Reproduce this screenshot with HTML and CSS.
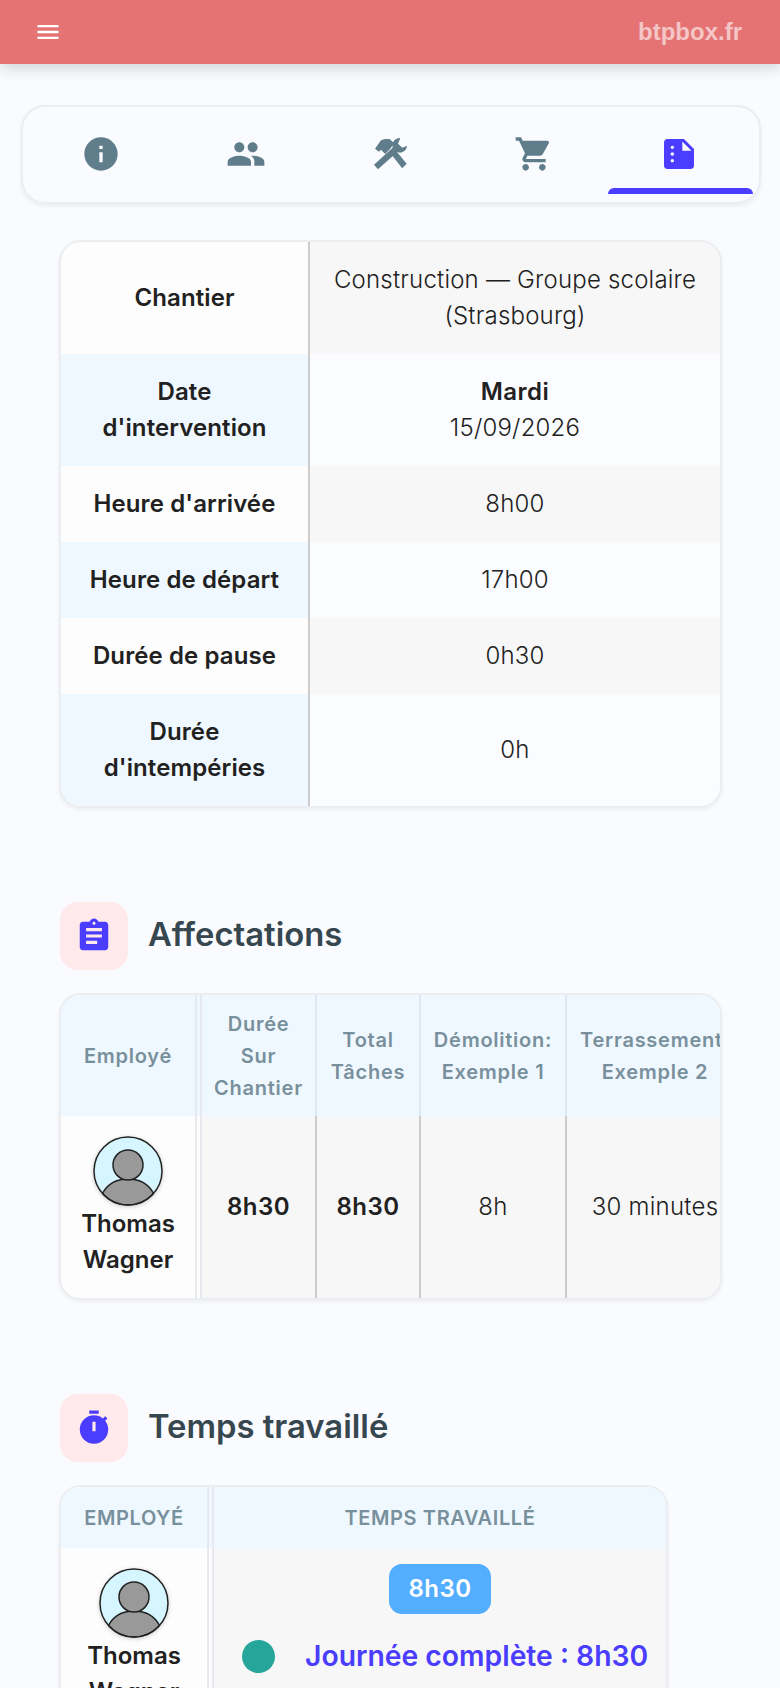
FILE: index.html
```html
<!DOCTYPE html>
<html lang="fr">
<head>
    <meta charset="UTF-8">
    <meta name="viewport" content="width=device-width, initial-scale=1.0">
    <title>btpbox.fr</title>
    <link rel="stylesheet" href="styles.css">
</head>
<body>

<header class="topbar">
    <svg class="menu-icon" viewBox="0 0 24 24"><path d="M3 18h18v-2H3v2zm0-5h18v-2H3v2zm0-7v2h18V6H3z"/></svg>
    <span class="brand">btpbox.fr</span>
</header>

<nav class="tabs">
    <div class="tab">
        <svg viewBox="0 0 24 24"><path d="M12 2C6.48 2 2 6.48 2 12s4.48 10 10 10 10-4.48 10-10S17.52 2 12 2zm1 15h-2v-6h2v6zm0-8h-2V7h2v2z"/></svg>
    </div>
    <div class="tab">
        <svg viewBox="0 0 24 24"><path d="M16 11c1.66 0 2.99-1.34 2.99-3S17.66 5 16 5c-1.66 0-3 1.34-3 3s1.34 3 3 3zm-8 0c1.66 0 2.99-1.34 2.99-3S9.66 5 8 5C6.34 5 5 6.34 5 8s1.34 3 3 3zm0 2c-2.33 0-7 1.17-7 3.5V19h14v-2.5c0-2.33-4.67-3.5-7-3.5zm8 0c-.29 0-.62.02-.97.05 1.16.84 1.97 1.97 1.97 3.45V19h6v-2.5c0-2.33-4.67-3.5-7-3.5z"/></svg>
    </div>
    <div class="tab">
        <svg viewBox="0 0 24 24">
            <path d="M12 12l2.500-2.500 6.900 8.400-2.700 2.700z"/>
            <path d="M2.400 8.800L6 3.800C8 2.900 10 2.800 11.300 3.200L14 5.600 11 9.500 8.500 12 6 9.500 4.800 10.600z"/>
            <path d="M1.800 18.400L13.500 7.800l2.500 2.800L4.200 21.200z"/>
            <path d="M17.600 2.400a4.400 4.400 0 1 0 4 4.600l-2.800 1.300-2.600-2.400z"/>
        </svg>
    </div>
    <div class="tab">
        <svg viewBox="0 0 24 24"><path d="M7 18c-1.100 0-1.990.9-1.990 2S5.900 22 7 22s2-.9 2-2-.9-2-2-2zM1 2v2h2l3.600 7.590-1.350 2.450c-.16.28-.25.61-.25.96 0 1.100.9 2 2 2h12v-2H7.420c-.14 0-.25-.11-.25-.25l.03-.12.9-1.630h7.450c.75 0 1.410-.41 1.750-1.030l3.580-6.490c.08-.14.12-.31.12-.48 0-.55-.45-1-1-1H5.210l-.94-2H1zm16 16c-1.100 0-1.990.9-1.990 2s.89 2 1.990 2 2-.9 2-2-.9-2-2-2z"/></svg>
    </div>
    <div class="tab tab-active">
        <svg viewBox="0 0 24 24"><path d="M15 3H5c-1.100 0-1.990.9-1.990 2L3 19c0 1.100.89 2 1.990 2H19c1.100 0 2-.9 2-2V9l-6-6zM8 17c-.55 0-1-.45-1-1s.45-1 1-1 1 .45 1 1-.45 1-1 1zm0-4c-.55 0-1-.45-1-1s.45-1 1-1 1 .45 1 1-.45 1-1 1zm0-4c-.55 0-1-.45-1-1s.45-1 1-1 1 .45 1 1-.45 1-1 1zm6 1V4.500l5.500 5.500H14z"/></svg>
    </div>
</nav>

<main class="content">

    <div class="card">
        <table class="info-table">
            <colgroup><col class="info-label-col"><col></colgroup>
            <tr>
                <th>Chantier</th>
                <td>Construction — Groupe scolaire (Strasbourg)</td>
            </tr>
            <tr>
                <th>Date d'intervention</th>
                <td><strong>Mardi</strong><br>15/09/2026</td>
            </tr>
            <tr>
                <th>Heure d'arrivée</th>
                <td>8h00</td>
            </tr>
            <tr>
                <th>Heure de départ</th>
                <td>17h00</td>
            </tr>
            <tr>
                <th>Durée de pause</th>
                <td>0h30</td>
            </tr>
            <tr>
                <th>Durée d'intempéries</th>
                <td>0h</td>
            </tr>
        </table>
    </div>

    <section class="section">
        <div class="section-head">
            <div class="section-icon">
                <svg viewBox="0 0 24 24"><path d="M19 3h-4.180C14.400 1.840 13.300 1 12 1c-1.300 0-2.400.84-2.820 2H5c-1.100 0-2 .9-2 2v14c0 1.100.9 2 2 2h14c1.100 0 2-.9 2-2V5c0-1.100-.9-2-2-2zm-7 0c.55 0 1 .45 1 1s-.45 1-1 1-1-.45-1-1 .45-1 1-1zm2 14H7v-2h7v2zm3-4H7v-2h10v2zm0-4H7V7h10v2z"/></svg>
            </div>
            <h2>Affectations</h2>
        </div>
        <div class="card">
            <table class="data-table assign-table">
                <colgroup>
                    <col class="a-employee"><col class="a-total"><col class="a-tasks"><col class="a-demo"><col class="a-earth">
                </colgroup>
                <thead>
                    <tr>
                        <th class="sticky-col">Employé</th>
                        <th>Durée<br>Sur<br>Chantier</th>
                        <th>Total<br>Tâches</th>
                        <th>Démolition:<br>Exemple 1</th>
                        <th>Terrassement:<br>Exemple 2</th>
                    </tr>
                </thead>
                <tbody>
                    <tr>
                        <td class="sticky-col employee">
                            <svg class="avatar" viewBox="0 0 70 70">
                                <circle cx="35" cy="35" r="34" fill="#d6f6ff"/>
                                <path d="M9.500 57.500C15 47 25 43 35 43s20 4 25.500 14.500A34 34 0 0 1 35 69 34 34 0 0 1 9.500 57.500z" fill="#999" stroke="#222" stroke-width="1.500"/>
                                <circle cx="35" cy="29" r="15" fill="#999" stroke="#222" stroke-width="1.500"/>
                                <circle cx="35" cy="35" r="34" fill="none" stroke="#222" stroke-width="1.500"/>
                            </svg>
                            <div>Thomas Wagner</div>
                        </td>
                        <td><strong>8h30</strong></td>
                        <td><strong>8h30</strong></td>
                        <td>8h</td>
                        <td>30 minutes</td>
                    </tr>
                </tbody>
            </table>
        </div>
    </section>

    <section class="section">
        <div class="section-head">
            <div class="section-icon">
                <svg viewBox="0 0 24 24"><path fill-rule="evenodd" d="M15 1H9v2h6V1zm-4 13h2V8h-2v6zm8.030-6.610l1.420-1.420c-.43-.51-.9-.99-1.410-1.410l-1.420 1.420C16.070 4.740 14.120 4 12 4c-4.970 0-9 4.030-9 9s4.020 9 9 9 9-4.030 9-9c0-2.120-.74-4.070-1.970-5.610z"/></svg>
            </div>
            <h2>Temps travaillé</h2>
        </div>
        <div class="card card-narrow">
            <table class="data-table time-table">
                <colgroup><col class="t-employee"><col></colgroup>
                <thead>
                    <tr>
                        <th class="sticky-col upper">Employé</th>
                        <th class="upper">Temps travaillé</th>
                    </tr>
                </thead>
                <tbody>
                    <tr>
                        <td class="sticky-col employee">
                            <svg class="avatar" viewBox="0 0 70 70">
                                <circle cx="35" cy="35" r="34" fill="#d6f6ff"/>
                                <path d="M9.500 57.500C15 47 25 43 35 43s20 4 25.500 14.500A34 34 0 0 1 35 69 34 34 0 0 1 9.500 57.500z" fill="#999" stroke="#222" stroke-width="1.500"/>
                                <circle cx="35" cy="29" r="15" fill="#999" stroke="#222" stroke-width="1.500"/>
                                <circle cx="35" cy="35" r="34" fill="none" stroke="#222" stroke-width="1.500"/>
                            </svg>
                            <div>Thomas Wagner</div>
                        </td>
                        <td class="time-cell">
                            <span class="time-badge">8h30</span>
                            <div class="day-line">
                                <span class="day-dot"></span>
                                <span class="day-text">Journée complète : 8h30</span>
                            </div>
                        </td>
                    </tr>
                </tbody>
            </table>
        </div>
    </section>

</main>

</body>
</html>
```

FILE: styles.css
```css
html, body {
    height: 1688px;
    overflow: hidden;
}
body {
    font-family: Inter, "Liberation Sans", sans-serif;
    margin: 0;
    background-color: #fafbfe;
    color: #212121;
}
.topbar {
    height: 64px;
    padding: 0 38px 0 34px;
    display: flex;
    justify-content: space-between;
    align-items: center;
    background-color: #e57373;
    box-shadow: 0 4px 14px rgba(0,0,0,0.16);
}
.menu-icon {
    width: 28px;
    height: 28px;
    fill: #fff;
}
.brand {
    font-family: "Liberation Sans", Arial, sans-serif;
    font-size: 24px;
    font-weight: 700;
    color: rgba(255,255,255,0.6);
}
.tabs {
    display: flex;
    width: 740px;
    height: 99px;
    margin: 41px 0 0 21px;
    padding: 0 6px;
    box-sizing: border-box;
    border: 2px solid #ebedf0;
    border-radius: 24px;
    box-shadow: 0 2px 4px rgba(0,0,0,0.06);
}
.tab {
    flex: 1;
    height: 87px;
    display: flex;
    justify-content: center;
    align-items: center;
    box-sizing: border-box;
    padding-top: 6px;
    position: relative;
}
.tab svg {
    width: 40px;
    height: 40px;
    fill: #607d8b;
}
.tab:nth-child(n+4) svg {
    margin-right: 4px;
}
.tab-active::after {
    content: "";
    position: absolute;
    left: 0;
    right: 0;
    bottom: 0;
    height: 6px;
    border-radius: 6px 6px 0 0;
    background-color: #4a3dff;
}
.tab-active svg {
    fill: #4a3dff;
}
.content {
    padding: 36px 58px 0 59px;
}
.card {
    border: 2px solid #ebedf0;
    border-radius: 22px;
    overflow: hidden;
    background-color: #fdfdfd;
    box-shadow: 0 2px 4px rgba(0,0,0,0.06);
}
.card-narrow {
    width: 609px;
    box-sizing: border-box;
}
table {
    border-collapse: separate;
    border-spacing: 0;
    table-layout: fixed;
    width: 100%;
}
th, td {
    text-align: center;
    font-size: 24px;
    line-height: 36px;
}
.info-table th, .info-table td {
    padding: 20px 16px;
}
.info-table th {
    font-weight: 600;
    letter-spacing: 0.1px;
    border-right: 2px solid #ccc;
}
.info-table td {
    font-weight: 300;
    letter-spacing: 0.2px;
    background-color: #fafcff;
}
.info-table strong, .data-table strong {
    font-weight: 600;
    letter-spacing: 0.5px;
}
.info-label-col {
    width: 249px;
}
.info-table tr:nth-child(even) th {
    background-color: #f0f8ff;
}
.info-table tr:nth-child(odd) td {
    background-color: #f7f7f7;
}
.section {
    margin-top: 94px;
}
.section-head {
    display: flex;
    align-items: center;
    gap: 20px;
    margin-bottom: 23px;
    margin-left: 1px;
}
.section-icon {
    width: 68px;
    height: 68px;
    border-radius: 18px;
    background-color: #ffe9ea;
    display: flex;
    justify-content: center;
    align-items: center;
}
.section-icon svg {
    width: 38px;
    height: 38px;
    fill: #4a3dff;
}
.section-head h2 {
    margin: 0 0 5px;
    font-size: 32.8px;
    font-weight: 600;
    color: #37474f;
}
.assign-table {
    width: 684px;
}
.a-employee { width: 141px; }
.a-total { width: 115px; }
.a-tasks { width: 104px; }
.a-demo { width: 146px; }
.a-earth { width: 178px; }
.data-table th {
    font-size: 20px;
    line-height: 32px;
    font-weight: 600;
    color: #78909c;
    background-color: #f0f8ff;
    border-right: 2px solid #dbe8f2;
    padding: 12.5px 0;
    letter-spacing: 0.75px;
    white-space: nowrap;
}
.data-table td {
    background-color: #f7f7f7;
    border-right: 2px solid #ccc;
    padding: 0;
    font-weight: 300;
    letter-spacing: 0.25px;
}
.data-table .sticky-col {
    border-right: 7px double #e6eaee;
}
.data-table td.employee {
    background-color: #fdfdfd;
    font-weight: 600;
    letter-spacing: 0;
    padding: 20px 8px;
}
.avatar {
    display: block;
    width: 70px;
    height: 70px;
    margin: 0 auto;
    filter: drop-shadow(0 1px 2px rgba(0,0,0,0.2));
}
.t-employee {
    width: 153px;
}
.time-table th {
    padding: 14.5px 0;
}
.time-table th:last-child {
    border-right: none;
}
.data-table .upper {
    text-transform: uppercase;
    letter-spacing: 0.6px;
}
.data-table td.time-cell {
    border-right: none;
    padding-top: 16px;
    vertical-align: top;
}
.time-badge {
    display: inline-block;
    padding: 7px 19px;
    border-radius: 13px;
    background-color: #54aeff;
    color: #fff;
    font-weight: 600;
    letter-spacing: 0.5px;
}
.day-line {
    display: flex;
    align-items: center;
    gap: 30px;
    margin-top: 24px;
    padding-left: 28px;
}
.day-dot {
    flex-shrink: 0;
    width: 33px;
    height: 33px;
    border-radius: 50%;
    background-color: #26a69a;
}
.day-text {
    font-size: 28.3px;
    font-weight: 600;
    letter-spacing: 0;
    color: #4a3dff;
    white-space: nowrap;
}
```
